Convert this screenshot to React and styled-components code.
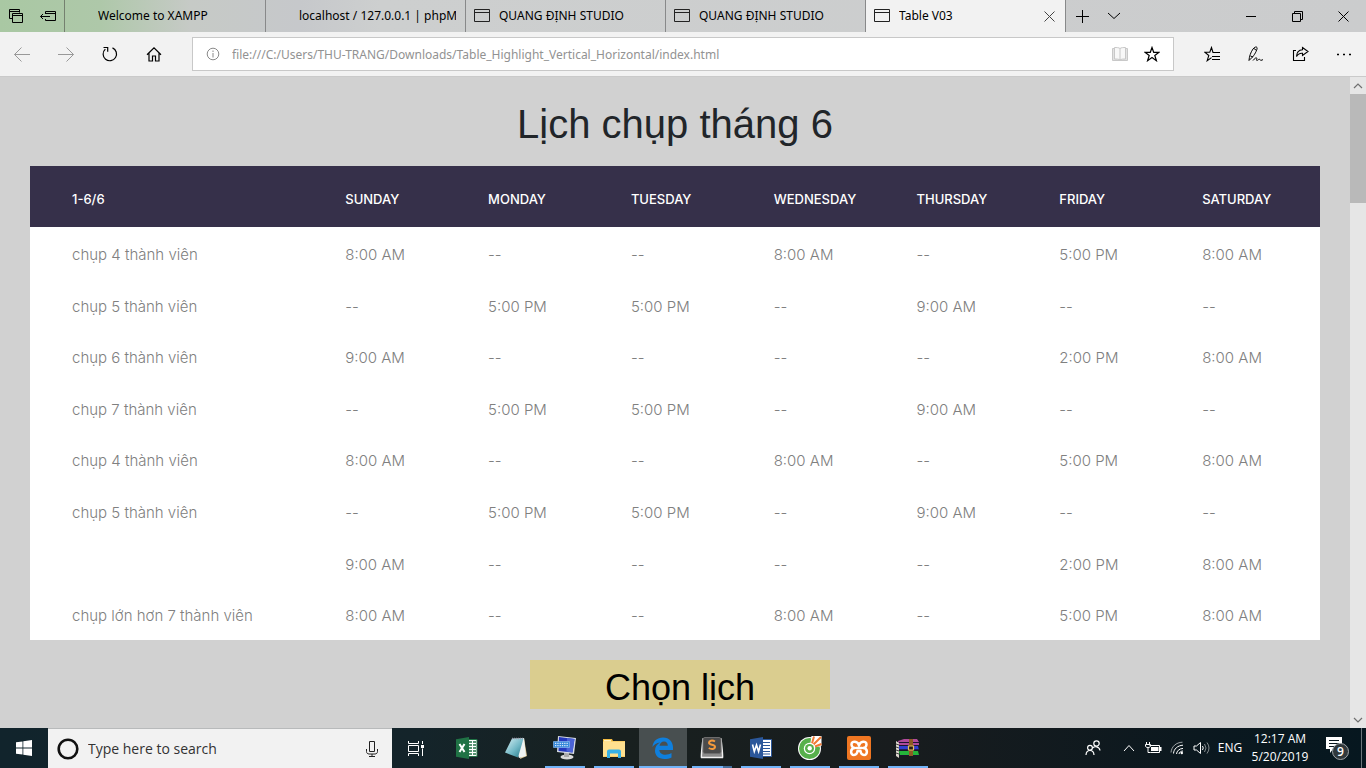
import React from "react";
import styled, { createGlobalStyle } from "styled-components";

const UI_FONT = '"Open Sans", "Noto Sans", sans-serif';
const TAB_FONT = '"Noto Sans", "Open Sans", sans-serif';

const GlobalStyle = createGlobalStyle`
  *, *::before, *::after { box-sizing: border-box; }
  body { margin: 0; background: #d1d1d1; font-family: ${UI_FONT}; }
  button { font: inherit; color: inherit; background: none; border: 0; padding: 0; margin: 0; }
  svg { display: block; flex: none; }
`;

const Desktop = styled.div`
  display: flex;
  flex-direction: column;
  min-height: 100vh;
`;

/* ---------- tab strip ---------- */

const TabStrip = styled.div`
  display: flex;
  height: 32px;
  background: linear-gradient(90deg, #a9c8a3 0, #aec8a9 100px, #c6cac6 190px, #c6c8cb 300px, #cdcfcf 380px, #cbcccd 100%);
  color: #000;
  font-family: ${TAB_FONT};
  font-size: 12px;
`;

const TabTools = styled.div`
  display: flex;
  flex: none;
  border-right: 1px solid #74806f;
`;

const StripButton = styled.button`
  display: grid;
  place-items: center;
  flex: none;
  width: ${(p) => p.$w || 32}px;
`;

const TabBox = styled.div`
  display: flex;
  align-items: center;
  flex: 0 1 ${(p) => (p.$first ? 201 : 200)}px;
  min-width: 0;
  gap: 9px;
  padding: 0 9px 0 ${(p) => (p.$plain ? 33 : 8)}px;
  border-right: 1px solid #88898a;
  background: ${(p) => (p.$active ? "#f2f2f2" : "transparent")};
`;

const TabTitle = styled.span`
  flex: 1;
  min-width: 0;
  overflow: hidden;
  white-space: nowrap;
  line-height: 20px;
`;

const Spacer = styled.div`
  flex: 1;
`;

/* ---------- toolbar ---------- */

const Toolbar = styled.div`
  display: flex;
  align-items: center;
  height: 45px;
  background: #f2f2f2;
  border-bottom: 1px solid #cacaca;
`;

const ToolButton = styled.button`
  display: grid;
  place-items: center;
  flex: none;
  width: 44px;
  height: 44px;
  color: ${(p) => (p.$dim ? "#999" : "#000")};
`;

const AddressBar = styled.label`
  display: flex;
  align-items: center;
  flex: 1;
  min-width: 0;
  height: 34px;
  margin: 0 16px;
  padding-right: 5px;
  background: #fff;
  border: 1px solid #c8c8c8;
`;

const AddressIcon = styled.span`
  display: grid;
  place-items: center;
  width: 39px;
  color: #8a8a8a;
`;

const AddressInput = styled.input`
  flex: 1;
  min-width: 0;
  height: 30px;
  padding: 0;
  border: 0;
  outline: 0;
  background: transparent;
  color: #929292;
  font: 12px/20px ${TAB_FONT};
`;

/* ---------- page ---------- */

const Viewport = styled.div`
  display: flex;
  flex: 1;
  background: #d1d1d1;
`;

const Page = styled.main`
  flex: 1;
  min-width: 0;
  padding: 23px 30px 19px;
  font-family: "Liberation Sans", Arial, sans-serif;
`;

const Title = styled.h1`
  margin: 0 0 18px;
  color: #212529;
  font-size: 40px;
  font-weight: 400;
  line-height: 48px;
  text-align: center;
`;

const Schedule = styled.table`
  width: 100%;
  table-layout: fixed;
  border-collapse: collapse;
  background: #fff;
  font-family: Inter, sans-serif;
  text-align: left;

  th, td { padding-left: 25px; padding-right: 0; white-space: nowrap; }
  tr > :first-child { width: 22.5%; padding-left: 42px; }
`;

const HeadCell = styled.th`
  padding-top: 24px;
  padding-bottom: 19px;
  background: #36304a;
  color: #fff;
  font-size: 13px;
  font-weight: 500;
  line-height: 18px;
`;

const Cell = styled.td`
  padding-top: 17px;
  padding-bottom: 13px;
  color: #808080;
  font-size: 15px;
  font-weight: 300;
  line-height: 1.44;
`;

const Actions = styled.div`
  display: flex;
  justify-content: center;
  padding: 20px 0 0 10px;
`;

const PickButton = styled.button`
  && {
    width: 300px;
    height: 49px;
    padding-top: 6px;
    background: #dacd8f;
    color: #000;
    font-family: "Liberation Sans", Arial, sans-serif;
    font-size: 36px;
    line-height: 43px;
  }
`;

const Scrollbar = styled.div`
  display: flex;
  flex-direction: column;
  flex: none;
  width: 16px;
  background: #e6e6e6;
`;

const ScrollArrow = styled.button`
  display: grid;
  place-items: center;
  height: 17px;
  color: #707070;
`;

const ScrollThumb = styled.div`
  flex: 0 0 109px;
  background: #b9b9b9;
`;

/* ---------- taskbar ---------- */

const Taskbar = styled.footer`
  display: flex;
  height: 40px;
  background: linear-gradient(90deg, #11242c 0, #14242a 420px, #18201f 620px, #181c1e 900px, #0b181f 1200px, #06171f 100%);
  color: #fff;
`;

const TaskButton = styled.button`
  position: relative;
  display: grid;
  place-items: center;
  flex: none;
  width: 48px;
  margin-left: ${(p) => p.$gap || 0}px;
  background: ${(p) => (p.$active ? "#484f50" : "transparent")};

  &::after {
    content: "";
    display: ${(p) => (p.$running ? "block" : "none")};
    position: absolute;
    bottom: 0;
    left: ${(p) => (p.$active ? 0 : 4)}px;
    right: ${(p) => (p.$active ? 0 : 4)}px;
    height: 2px;
    background: ${(p) => (p.$stacked ? "linear-gradient(90deg, #71b3f8 31px, #456f9c 31px)" : "#71b3f8")};
  }
`;

const SearchBox = styled.label`
  display: flex;
  align-items: center;
  flex: 0 1 344px;
  min-width: 0;
  padding: 0 8px;
  background: #f2f2f2;
  border-top: 1px solid #b8babb;
  color: #222;
`;

const SearchInput = styled.input`
  flex: 1;
  min-width: 0;
  margin: 0 8px;
  padding: 0;
  border: 0;
  outline: 0;
  background: transparent;
  font: 14px/20px ${UI_FONT};
  &::placeholder { color: #333; opacity: 1; }
`;

const TrayButton = styled.button`
  display: grid;
  place-items: center;
  align-content: center;
  flex: none;
  width: ${(p) => p.$w || 24}px;
  font-size: 12px;
  line-height: 18px;
  white-space: nowrap;
`;

const ShowDesktop = styled.button`
  && { width: 5px; border-left: 1px solid #6b767b; }
`;

/* ---------- icons ---------- */

const Line = ({ w = 16, h = w, sw = 1, children, ...rest }) => (
  <svg width={w} height={h} viewBox={`0 0 ${w} ${h}`} fill="none" stroke="currentColor" strokeWidth={sw} aria-hidden="true" {...rest}>
    {children}
  </svg>
);

const TabsAside = () => (
  <Line>
    <path d="M4.500 10.500h-3v-9h10v3M1.500 3.500h10" />
    <path d="M4.500 5.500h10v9h-10zM4.500 7.500h10" />
  </Line>
);
const SetAside = () => (
  <Line>
    <path d="M5.500 6V3.500h10v9h-10V11M5.500 5.500h10M.5 8.500H10M3 6 .5 8.500 3 11" />
  </Line>
);
const PageIcon = () => (
  <Line h={16} stroke="#222"><path d="M.5 1.500h15v12H.5zM.5 4.500h15" /></Line>
);
const CloseIcon = ({ color = "currentColor" }) => (
  <Line w={11} stroke={color}><path d="M.5.5l10 10M10.500.5l-10 10" /></Line>
);
const PlusIcon = () => <Line w={14}><path d="M7.500 1v13M1 7.500h13" /></Line>;
const ChevronIcon = ({ w = 14, up }) => (
  <Line w={w} h={8}>
    <path d={up ? `M1 7l${w / 2 - 1}-5.500L${w - 1} 7` : `M1 1l${w / 2 - 1} 5.500L${w - 1} 1`} />
  </Line>
);
const ScrollChevron = ({ up }) => (
  <Line w={10} h={6} sw="1.2"><path d={up ? "M1 5l4-4 4 4" : "M1 1l4 4 4-4"} /></Line>
);
const MinIcon = () => <Line w={10}><path d="M0 5.500h10" /></Line>;
const RestoreIcon = () => <Line w={11}><path d="M.5 2.500h8v8h-8zM2.500 2.500v-2h8v8h-2" /></Line>;

const BackIcon = () => <Line w={16}><path d="M.5 8.500H16M7.500 1.500l-7 7 7 7" /></Line>;
const ForwardIcon = () => <Line w={16}><path d="M0 8.500h15.500M8.500 1.500l7 7-7 7" /></Line>;
const RefreshIcon = () => (
  <Line w={16} sw="1.2"><path d="M10.500 1.900a6.700 6.700 0 1 1-7.200 1.200M1.500 1.500h4.200v4.200" /></Line>
);
const HomeIcon = () => (
  <Line w={16} sw="1.2"><path d="M1 8.700 8 1.800l7 6.900M3 7v8h3.500v-5h3v5H13V7" /></Line>
);
const InfoIcon = () => (
  <Line w={14}><circle cx="7" cy="7" r="5.800" /><path d="M7 6v4.500M7 3.500V5" /></Line>
);
const BookIcon = () => (
  <Line w={16} stroke="#c8c8c8">
    <path d="M2.500 2.500H.5v12h15v-12h-2" fill="#e2e2e2" />
    <path d="M8 2.500c-1-1-3.500-1-5.500-1V13c2 0 4.500 0 5.500 1 1-1 3.500-1 5.500-1V1.500c-2 0-4.500 0-5.500 1zm0 0V14" fill="#f8f8f8" />
  </Line>
);
const StarIcon = () => (
  <Line w={16} sw="1.2"><path d="M8 1.500l1.700 4.800H15l-4.200 3.200 1.600 5.200L8 11.600l-4.400 3.100 1.600-5.200L1 6.300h5.300z" /></Line>
);
const HubIcon = () => (
  <Line w={16}>
    <path d="M9 6.500 7.500 1.500 5.800 6.300H.8l4 3.200-1.600 5.200 4.300-3.100M8.500 6.500H16M8 10.500h8M8 13.500h8" strokeWidth="1.100" />
  </Line>
);
const PenIcon = () => (
  <Line w={16}>
    <path d="M1 14.500C1.200 11 2.500 6.500 5 3 6.500.9 8.500.5 9 1.500c.6 1.400-1.500 6-4.500 9.500L1 14.500zM6 2.500l2.500 2M2.500 10l2.500 1M5 14.500c2-2.500 3.500-3.300 3.800-2.300.2.800-.8 2.300.1 2.300 1 0 1.700-1.500 2.600-1.200.8.300.5 1 1.500 1 .7 0 1.500-.3 2-.8" />
  </Line>
);
const ShareIcon = () => (
  <Line w={17} h={16}>
    <path d="M4 4.500H1.500v10h11V11M10.500 1.500l5.500 4-5.500 4V7.200C7.500 7 5.800 8 4.500 10.500c.2-4 2.500-6.500 6-6.700z" strokeWidth="1.100" />
  </Line>
);
const MoreIcon = () => (
  <Line w={16} stroke="none"><path fill="currentColor" d="M1 8h2v1H1zM7 8h2v1H7zM13 8h2v1h-2zM1.500 7.500h1v2h-1zM7.500 7.500h1v2h-1zM13.500 7.500h1v2h-1z" /></Line>
);

const Windows = () => (
  <svg width="16" height="16" viewBox="0 0 16 16" fill="#fff" aria-hidden="true">
    <path d="M0 2.300 6.500 1.400v6.200H0zM7.300 1.300 16 0v7.600H7.300zM0 8.400h6.500v6.200L0 13.700zM7.300 8.400H16V16l-8.700-1.300z" />
  </svg>
);
const Cortana = () => (
  <svg width="24" height="24" viewBox="0 0 24 24" fill="none" aria-hidden="true">
    <circle cx="12" cy="12" r="9.300" stroke="#111" strokeWidth="2.600" />
  </svg>
);
const Mic = () => (
  <Line w={14} h={18}><path d="M4.500 1.500h5v10h-5zM1.500 9v2.500c0 1.500 1 2.500 2.500 2.500h6c1.500 0 2.500-1 2.500-2.500V9M7 14v2.500M4 16.500h6" /></Line>
);
const TaskView = () => (
  <Line w={18} h={16}>
    <path d="M1.500 1v2.500h10V1M1.500 5.500h10v6h-10zM1.500 16v-2.500h10V16M15.500 1v3M15.500 8.500V16" />
    <path d="M14 5h3v3h-3z" fill="currentColor" stroke="none" />
  </Line>
);
const Excel = () => (
  <svg width="24" height="24" viewBox="0 0 24 24" aria-hidden="true">
    <path d="M12 3.500h10v17H12z" fill="#fff" stroke="#207245" />
    <path d="M14 6h7M14 9h7M14 12h7M14 15h7M14 18h7" stroke="#207245" strokeWidth="1.500" />
    <path d="M17.500 4v16" stroke="#fff" />
    <path d="M1 3.200 14 1v22L1 20.800z" fill="#207245" />
    <path d="M4.500 8l5 8M9.500 8l-5 8" stroke="#fff" strokeWidth="2" />
  </svg>
);
const Notepad = () => (
  <svg width="24" height="24" viewBox="0 0 24 24" aria-hidden="true">
    <defs><linearGradient id="pad" x1="0" y1="0" x2="1" y2="1"><stop offset="0" stopColor="#d9f1f5" /><stop offset=".55" stopColor="#71b8c6" /><stop offset="1" stopColor="#1f7384" /></linearGradient></defs>
    <path d="M20 2l3 18-7 3z" fill="#d8c28e" />
    <path d="M8 3l12-1 2 18-7 2z" fill="#eef3f3" />
    <path d="M8 2.500h11.500L14 21.500 1 16.500z" fill="url(#pad)" />
    <path d="M8 2.500h11" stroke="#99a" strokeWidth="1.500" strokeDasharray="1 1" />
  </svg>
);
const Computer = () => (
  <svg width="24" height="24" viewBox="0 0 24 24" aria-hidden="true">
    <ellipse cx="14" cy="21" rx="6.500" ry="2.500" fill="#d9d9d9" />
    <path d="M11 16h5v5h-5z" fill="#a9a9a9" />
    <path d="M5 0l18 2-2 16-17-2z" fill="#d6dbe4" />
    <path d="M6 1l15.500 2-2 13.500-14-1.500z" fill="#2438bd" />
    <path d="M14 2l7.500 1-2 13.500-6-1z" fill="#4b63d6" />
    <path d="M.5 5.500h16v6H.5z" fill="#3689db" stroke="#92c5f5" strokeWidth=".6" />
    <path d="M2 7.300h13M2 9.700h13" stroke="#fff" strokeDasharray="1.300 1" />
  </svg>
);
const Explorer = () => (
  <svg width="24" height="24" viewBox="0 0 24 24" aria-hidden="true">
    <path d="M1 3h9l1 2h12v16H1z" fill="#f5bd42" />
    <path d="M1 5.500h22v15H1z" fill="#ffe08f" />
    <path d="M2 4h7v1.500H2z" fill="#fff1c1" />
    <path d="M5 22v-6.500q0-2 2-2h10q2 0 2 2V22h-3v-4.500H8V22z" fill="#37b0e6" />
  </svg>
);
const Edge = () => (
  <svg width="24" height="24" viewBox="0 0 24 24" aria-hidden="true">
    <path fill="#0f7fdd" d="M1.500 11C2 5 6.300 1.500 12 1.500c6.500 0 10 4.700 10 10V14H8.300c.3 3.200 2.900 4.700 6 4.700 2.300 0 4.500-.7 6.200-1.700v4.400c-2 1.100-4.500 1.600-7.200 1.600C7.600 23 4 19.700 4 14.800c0-3.700 2-6.700 5-8.200C5.700 7 3 8.500 1.500 11zm7-1.300h8.300c0-2.500-1.300-4.300-3.800-4.300-2.400 0-4.100 1.900-4.500 4.300z" />
  </svg>
);
const Sublime = () => (
  <svg width="24" height="24" viewBox="0 0 24 24" aria-hidden="true">
    <path d="M3 3Q1 20 1.500 21.500h21Q23 20 21 3z" fill="#8b8b8b" stroke="#f0f0f0" strokeWidth="1.500" />
    <rect x="3" y="1.500" width="18" height="16" rx="2" fill="#4b4b4b" stroke="#6d6d6d" />
    <path d="M15 5.500c-2.800-1.600-6-.9-6 1.300 0 2.600 6 1.300 6 4 0 2.500-3.700 2.800-6.200 1.200" fill="none" stroke="#f59a3c" strokeWidth="2" />
  </svg>
);
const Word = () => (
  <svg width="24" height="24" viewBox="0 0 24 24" aria-hidden="true">
    <path d="M12 3.500h10.500v17H12z" fill="#fff" stroke="#2b579a" />
    <path d="M14 6.500h7M14 9.500h7M14 12.500h7M14 15.500h7M14 18h7" stroke="#2b579a" strokeWidth="1.200" />
    <path d="M1 3.200 14 1v22L1 20.800z" fill="#2b579a" />
    <path d="M3.500 8.500 5.300 15.500 7.500 9 9.600 15.500 11.500 8.500" fill="none" stroke="#fff" strokeWidth="1.600" />
  </svg>
);
const CocCoc = () => (
  <svg width="26" height="26" viewBox="0 0 26 26" aria-hidden="true">
    <circle cx="12.500" cy="13.500" r="11.500" fill="#fff" />
    <circle cx="12.500" cy="13.500" r="10.500" fill="#57b04b" />
    <path d="M12.500 13.500 14.500 1h10v10z" fill="#fff" />
    <path d="M15 8.500 17 1.500M16.500 9.500 24 2M18 11.500l6.500-2.500" stroke="#f27a35" strokeWidth="2" />
    <circle cx="12.500" cy="13.500" r="5.700" fill="#fff" />
    <circle cx="12.500" cy="13.500" r="4.500" fill="#57b04b" />
    <circle cx="12.700" cy="13.300" r="2.200" fill="#fff" />
  </svg>
);
const Xampp = () => (
  <svg width="24" height="24" viewBox="0 0 24 24" aria-hidden="true">
    <rect width="24" height="24" rx="2" fill="#ef7622" />
    <path d="M12 9.500C11 5 4.500 4.500 4.500 8.500c0 2 1.500 3.500 3.500 3.500-5 0-5 7-1 7 3 0 3.300-2 3.500-4h3c.2 2 .5 4 3.500 4 4 0 4-7-1-7 2 0 3.500-1.500 3.500-3.500C19.500 4.500 13 5 12 9.500zM9 12h6" fill="none" stroke="#fff" strokeWidth="2.500" strokeLinejoin="round" />
  </svg>
);
const WinRar = () => (
  <svg width="26" height="24" viewBox="0 0 26 24" aria-hidden="true">
    <path d="M3 5l6-2h13l2 3v3l-20 1z" fill="#b04a9b" />
    <path d="M4 10h19l1 4H4z" fill="#2f3fd0" />
    <path d="M4 15h19l1 4-2 1H5z" fill="#25b53a" />
    <path d="M4 6.500h20M4 9.500h20M4 13.800h20M4 19.500h20" stroke="#1c1530" strokeWidth="1.200" />
    <path d="M1 5l3 2v15l-3-2z" fill="#ddd8d0" />
    <path d="M1 8l3 1M1 11l3 1M1 14l3 1M1 17l3 1" stroke="#444" />
    <path d="M14 3h4v17h-4z" fill="#8d5b24" />
    <path d="M13.500 10h5v4h-5z" fill="#2a1d12" stroke="#e6bd62" strokeWidth="1.200" />
  </svg>
);

const People = () => (
  <Line w={16} h={16} sw="1.200">
    <circle cx="11.500" cy="3.500" r="2.700" /><circle cx="5" cy="7.800" r="2.400" />
    <path d="M7.800 8c1.500-2 6.500-1.700 7.200 2.500M1 15c.3-6 7.700-6 8 0" />
  </Line>
);
const Battery = () => (
  <Line w={18} h={14}>
    <path d="M5.500 4.500h10v7h-9" /><path d="M16 6h1.500v4H16z" fill="currentColor" stroke="none" />
    <path d="M7 6h7.500v4H7z" fill="currentColor" stroke="none" />
    <path d="M2.500 1v2M5.500 1v2M1.500 3.500h5v1.500c0 2-5 2-5 0zM4 6v5.500h2.500" />
  </Line>
);
const Wifi = () => (
  <Line w={14} h={14}>
    <path d="M1 11.500C1.500 5.500 6 1.500 12.500 1.200" opacity=".6" />
    <path d="M3.500 12.500c.3-4.500 4-8 9.500-8.300M6.500 13c.3-3 2.500-5.300 6.500-5.600M9 13c.3-1.500 1.500-2.800 4-3" />
    <circle cx="11.800" cy="12" r="1.200" fill="currentColor" stroke="none" />
  </Line>
);
const Sound = () => (
  <Line w={17} h={14}>
    <path d="M1 5h2.500l4-3.500v11L3.500 9H1z" />
    <path d="M9.500 5q1.500 2 0 4" /><path d="M11.500 3q3 4 0 8M14 1.500q4 5.500 0 11" opacity=".5" />
  </Line>
);

const Notice = styled.span`
  position: relative;
  display: block;
  width: 24px;
  height: 24px;
`;
const NoticeBadge = styled.span`
  position: absolute;
  left: 7px;
  top: 7px;
  width: 17px;
  height: 17px;
  border: 1px solid #a0a5a8;
  border-radius: 50%;
  background: #30383c;
  font-size: 12px;
  font-weight: 600;
  line-height: 15px;
  text-align: center;
`;

/* ---------- data ---------- */

const days = ["SUNDAY", "MONDAY", "TUESDAY", "WEDNESDAY", "THURSDAY", "FRIDAY", "SATURDAY"];
const shift = (sun, wed, fri) => [sun, "--", "--", wed, "--", fri, "8:00 AM"];
const early = shift("8:00 AM", "8:00 AM", "5:00 PM");
const late = shift("9:00 AM", "--", "2:00 PM");
const mid = ["--", "5:00 PM", "5:00 PM", "--", "9:00 AM", "--", "--"];
const rows = [
  ["chụp 4 thành viên", early],
  ["chụp 5 thành viên", mid],
  ["chụp 6 thành viên", late],
  ["chụp 7 thành viên", mid],
  ["chụp 4 thành viên", early],
  ["chụp 5 thành viên", mid],
  ["", late],
  ["chụp lớn hơn 7 thành viên", early],
];
const tabs = [
  { title: "Welcome to XAMPP", plain: true },
  { title: "localhost / 127.0.0.1 | phpM", plain: true },
  { title: "QUANG ĐỊNH STUDIO" },
  { title: "QUANG ĐỊNH STUDIO" },
  { title: "Table V03", active: true },
];
const apps = [
  { name: "Excel", Icon: Excel, gap: 3 },
  { name: "Notepad", Icon: Notepad },
  { name: "Remote computer", Icon: Computer, running: true },
  { name: "File Explorer", Icon: Explorer, running: true },
  { name: "Edge", Icon: Edge, running: true, active: true },
  { name: "Sublime Text", Icon: Sublime, running: true, stacked: true },
  { name: "Word", Icon: Word, running: true },
  { name: "Browser", Icon: CocCoc, running: true },
  { name: "XAMPP", Icon: Xampp, running: true },
  { name: "WinRAR", Icon: WinRar, running: true },
];

export default function App() {
  return (
    <Desktop>
      <GlobalStyle />
      <TabStrip>
        <TabTools>
          <StripButton aria-label="Tabs you've set aside"><TabsAside /></StripButton>
          <StripButton aria-label="Set these tabs aside"><SetAside /></StripButton>
        </TabTools>
        {tabs.map((t, i) => (
          <TabBox key={i} $first={i === 0} $plain={t.plain} $active={t.active}>
            {!t.plain && <PageIcon />}
            <TabTitle>{t.title}</TabTitle>
            {t.active && <StripButton $w={14} aria-label="Close tab"><CloseIcon color="#444" /></StripButton>}
          </TabBox>
        ))}
        <StripButton aria-label="New tab"><PlusIcon /></StripButton>
        <StripButton aria-label="Show tab previews"><ChevronIcon /></StripButton>
        <Spacer />
        <StripButton $w={46} aria-label="Minimize"><MinIcon /></StripButton>
        <StripButton $w={46} aria-label="Restore"><RestoreIcon /></StripButton>
        <StripButton $w={46} aria-label="Close"><CloseIcon /></StripButton>
      </TabStrip>

      <Toolbar>
        <ToolButton $dim aria-label="Back"><BackIcon /></ToolButton>
        <ToolButton $dim aria-label="Forward"><ForwardIcon /></ToolButton>
        <ToolButton aria-label="Refresh"><RefreshIcon /></ToolButton>
        <ToolButton aria-label="Home"><HomeIcon /></ToolButton>
        <AddressBar>
          <AddressIcon><InfoIcon /></AddressIcon>
          <AddressInput aria-label="Address" readOnly value="file:///C:/Users/THU-TRANG/Downloads/Table_Highlight_Vertical_Horizontal/index.html" />
          <StripButton aria-label="Reading view"><BookIcon /></StripButton>
          <StripButton aria-label="Add to favorites"><StarIcon /></StripButton>
        </AddressBar>
        <ToolButton aria-label="Hub"><HubIcon /></ToolButton>
        <ToolButton aria-label="Add notes"><PenIcon /></ToolButton>
        <ToolButton aria-label="Share"><ShareIcon /></ToolButton>
        <ToolButton aria-label="More"><MoreIcon /></ToolButton>
      </Toolbar>

      <Viewport>
        <Page>
          <Title>Lịch chụp tháng 6</Title>
          <Schedule>
            <thead>
              <tr>
                <HeadCell scope="col">1-6/6</HeadCell>
                {days.map((d) => <HeadCell key={d} scope="col">{d}</HeadCell>)}
              </tr>
            </thead>
            <tbody>
              {rows.map(([label, times], i) => (
                <tr key={i}>
                  <Cell>{label}</Cell>
                  {times.map((t, j) => <Cell key={j}>{t}</Cell>)}
                </tr>
              ))}
            </tbody>
          </Schedule>
          <Actions><PickButton>Chọn lịch</PickButton></Actions>
        </Page>
        <Scrollbar>
          <ScrollArrow aria-label="Scroll up"><ScrollChevron up /></ScrollArrow>
          <ScrollThumb />
          <Spacer />
          <ScrollArrow aria-label="Scroll down"><ScrollChevron /></ScrollArrow>
        </Scrollbar>
      </Viewport>

      <Taskbar>
        <TaskButton aria-label="Start"><Windows /></TaskButton>
        <SearchBox>
          <Cortana />
          <SearchInput aria-label="Search" placeholder="Type here to search" />
          <StripButton $w={24} aria-label="Speak"><Mic /></StripButton>
        </SearchBox>
        <TaskButton aria-label="Task view"><TaskView /></TaskButton>
        {apps.map(({ name, Icon, gap = 1, running, active, stacked }) => (
          <TaskButton key={name} aria-label={name} $gap={gap} $running={running} $active={active} $stacked={stacked}>
            <Icon />
          </TaskButton>
        ))}
        <Spacer />
        <TrayButton $w={48} aria-label="People"><People /></TrayButton>
        <TrayButton aria-label="Show hidden icons"><ChevronIcon w={12} up /></TrayButton>
        <TrayButton aria-label="Battery"><Battery /></TrayButton>
        <TrayButton aria-label="Network"><Wifi /></TrayButton>
        <TrayButton aria-label="Volume"><Sound /></TrayButton>
        <TrayButton $w={34}>ENG</TrayButton>
        <TrayButton $w={66}>
          <span>12:17 AM</span>
          <span>5/20/2019</span>
        </TrayButton>
        <TrayButton $w={48} aria-label="Notifications">
          <Notice>
            <Line w={18} h={18} stroke="none">
              <path d="M1 1h16v12h-9l-3 4v-4H1z" fill="#fff" />
              <path d="M4 4.500h10M4 7.500h10M4 10.500h6" stroke="#0b181f" />
            </Line>
            <NoticeBadge>9</NoticeBadge>
          </Notice>
        </TrayButton>
        <ShowDesktop aria-label="Show desktop" />
      </Taskbar>
    </Desktop>
  );
}
